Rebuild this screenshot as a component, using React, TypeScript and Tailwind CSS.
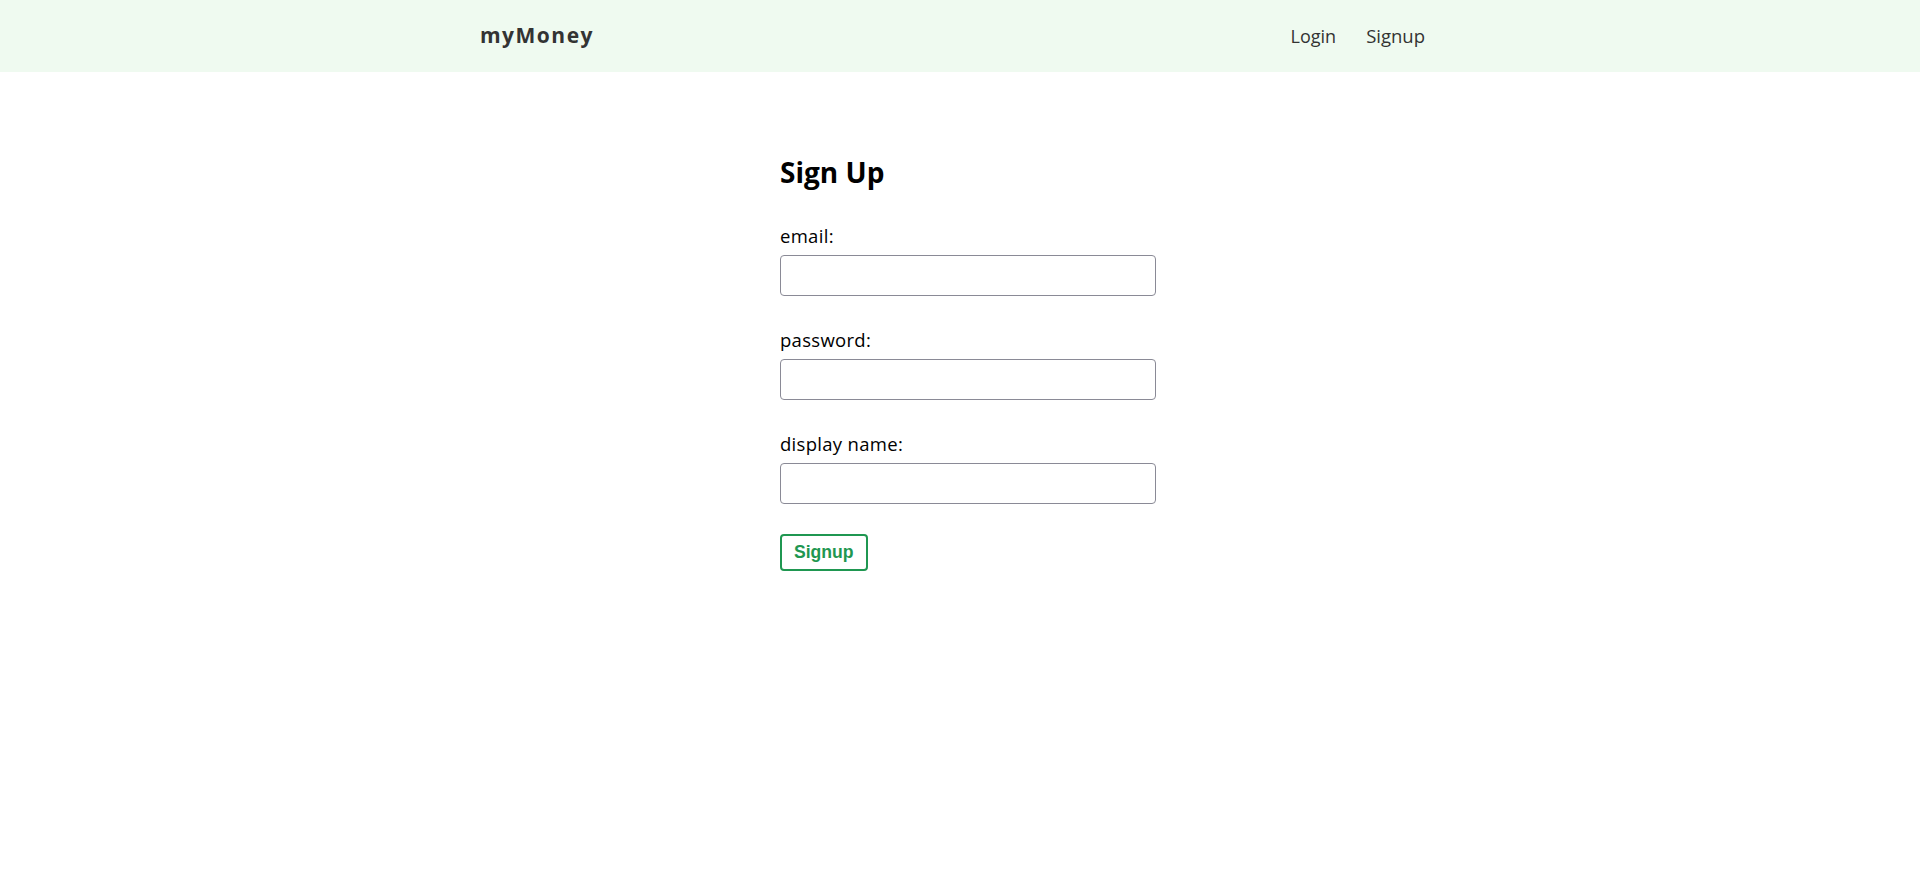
import { useState } from "react";

const font = { fontFamily: '"Open Sans", "Noto Sans", sans-serif' };

function Navbar() {
    return (
        <nav className="w-full bg-[#effaf0] h-[72px] flex items-center">
            <ul className="w-[960px] mx-auto flex items-center pr-[15px]">
                <li className="mr-auto text-[21px] font-bold tracking-[1.5px] text-[#333]">
                    myMoney
                </li>
                <li>
                    <a href="#" className="text-[18px] text-[#333]">
                        Login
                    </a>
                </li>
                <li className="ml-[30px]">
                    <a href="#" className="text-[18.5px] text-[#333]">
                        Signup
                    </a>
                </li>
            </ul>
        </nav>
    );
}

function Field({
    label,
    type,
    value,
    onChange,
}: {
    label: string;
    type: string;
    value: string;
    onChange: (v: string) => void;
}) {
    return (
        <label className="block mt-[30px]">
            <span className="block text-[18.5px] tracking-[0.3px] leading-[27px] mb-[6px] text-black">
                {label}
            </span>
            <input
                type={type}
                value={value}
                onChange={(e) => onChange(e.target.value)}
                className="block w-[376px] h-[41px] px-[6px] border border-[#8a8a96] rounded-[4px] text-[#777] outline-none"
            />
        </label>
    );
}

export default function App() {
    const [email, setEmail] = useState("");
    const [password, setPassword] = useState("");
    const [displayName, setDisplayName] = useState("");

    return (
        <div className="min-h-screen bg-white" style={font}>
            <Navbar />
            <form
                className="w-[400px] mx-auto mt-[60px] p-[20px]"
                onSubmit={(e) => e.preventDefault()}
            >
                <h2 className="text-[28px] font-bold leading-[40px] text-black">
                    Sign Up
                </h2>
                <Field label="email:" type="email" value={email} onChange={setEmail} />
                <Field
                    label="password:"
                    type="password"
                    value={password}
                    onChange={setPassword}
                />
                <Field
                    label="display name:"
                    type="text"
                    value={displayName}
                    onChange={setDisplayName}
                />
                <button
                    className="mt-[30px] h-[37px] px-[12px] border-2 border-[#1f9751] rounded-[4px] bg-white text-[#1f9751] font-bold text-[17.6px]"
                    style={{ fontFamily: '"Liberation Sans", Arial, sans-serif' }}
                >
                    Signup
                </button>
            </form>
        </div>
    );
}
